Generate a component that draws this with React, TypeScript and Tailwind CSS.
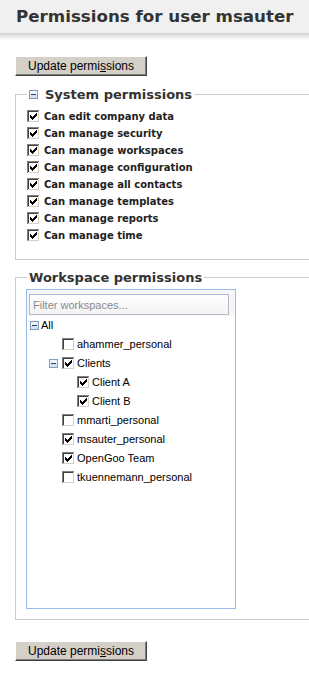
import React from 'react';

const CheckBox: React.FC<{ checked?: boolean }> = ({ checked }) => (
  <svg width="13" height="13" viewBox="0 0 13 13" shapeRendering="crispEdges" className="shrink-0 block">
    <rect x="0" y="0" width="13" height="13" fill="#ffffff" />
    <rect x="0" y="0" width="12" height="1" fill="#808080" />
    <rect x="0" y="0" width="1" height="12" fill="#808080" />
    <rect x="1" y="1" width="10" height="1" fill="#404040" />
    <rect x="1" y="1" width="1" height="10" fill="#404040" />
    <rect x="1" y="11" width="11" height="1" fill="#d4d0c8" />
    <rect x="11" y="1" width="1" height="11" fill="#d4d0c8" />
    {checked && (
      <g fill="#000000">
        <rect x="9" y="3" width="1" height="3" />
        <rect x="8" y="4" width="1" height="3" />
        <rect x="7" y="5" width="1" height="3" />
        <rect x="6" y="6" width="1" height="3" />
        <rect x="5" y="7" width="1" height="3" />
        <rect x="4" y="6" width="1" height="3" />
        <rect x="3" y="5" width="1" height="3" />
      </g>
    )}
  </svg>
);

const MinusBox: React.FC = () => (
  <svg width="9" height="9" viewBox="0 0 9 9" shapeRendering="crispEdges" className="shrink-0 block">
    <rect x="0" y="0" width="9" height="9" fill="#7f9dbf" />
    <rect x="1" y="1" width="7" height="7" fill="#eef3fa" />
    <rect x="1" y="5" width="7" height="3" fill="#d6e2f1" />
    <rect x="2" y="4" width="5" height="1" fill="#23416e" />
  </svg>
);

const UpdateButton: React.FC = () => (
  <button
    type="button"
    className="ml-[15px] flex h-[20px] w-[132px] items-center justify-center border border-t-white border-l-white border-r-[#404040] border-b-[#404040] bg-[#d4d0c8] shadow-[inset_-1px_-1px_#808080] font-['Liberation_Sans',sans-serif] text-[12px] leading-none text-black"
  >
    Update permi<span className="underline">s</span>sions
  </button>
);

const systemPerms = [
  'Can edit company data',
  'Can manage security',
  'Can manage workspaces',
  'Can manage configuration',
  'Can manage all contacts',
  'Can manage templates',
  'Can manage reports',
  'Can manage time',
];

type TreeRow = { label: string; pad: string; expander?: boolean; checkbox?: boolean; checked?: boolean };

const treeRows: TreeRow[] = [
  { label: 'All', pad: 'pl-[3px]', expander: true },
  { label: 'ahammer_personal', pad: 'pl-[35px]', checkbox: true },
  { label: 'Clients', pad: 'pl-[22px]', expander: true, checkbox: true, checked: true },
  { label: 'Client A', pad: 'pl-[50px]', checkbox: true, checked: true },
  { label: 'Client B', pad: 'pl-[50px]', checkbox: true, checked: true },
  { label: 'mmarti_personal', pad: 'pl-[35px]', checkbox: true },
  { label: 'msauter_personal', pad: 'pl-[35px]', checkbox: true, checked: true },
  { label: 'OpenGoo Team', pad: 'pl-[35px]', checkbox: true, checked: true },
  { label: 'tkuennemann_personal', pad: 'pl-[35px]', checkbox: true },
];

export default function App() {
  return (
    <div className="min-h-[675px] w-[309px] overflow-hidden bg-white font-['DejaVu_Sans',sans-serif] text-[#333]">
      {/* Title bar */}
      <div className="flex h-[33px] items-center bg-[#f0f0f0] pl-[16px]">
        <h1 className="whitespace-nowrap text-[16.7px] font-bold leading-none text-[#333]">
          Permissions for user msauter
        </h1>
      </div>
      <div className="h-[7px] bg-gradient-to-b from-[#d2d2d2] to-white" />

      <div className="pt-[16px]">
        <UpdateButton />
      </div>

      {/* System permissions */}
      <fieldset className="ml-[15px] mt-[10px] border border-r-0 border-[#cccccc] pl-[11px] pb-[15px]">
        <legend className="px-[2px]">
          <span className="flex h-[16px] items-center gap-[7px] text-[13px] font-bold leading-none text-[#333]">
            <MinusBox />
            System permissions
          </span>
        </legend>
        <div className="pt-[6px]">
          {systemPerms.map((p) => (
            <div key={p} className="flex h-[17px] items-center gap-[4px]">
              <CheckBox checked />
              <span className="whitespace-nowrap text-[10px] font-bold text-[#222]">{p}</span>
            </div>
          ))}
        </div>
      </fieldset>

      {/* Workspace permissions */}
      <fieldset className="ml-[15px] mt-[9px] border border-r-0 border-[#cccccc] pl-[10px] pb-[10px]">
        <legend className="ml-[1px] px-[2px]">
          <span className="flex h-[16px] items-center text-[13px] font-bold leading-none text-[#333]">
            Workspace permissions
          </span>
        </legend>
        <div className="mt-[4px] flex h-[320px] w-[210px] flex-col border border-[#99bbe8] bg-white font-['Liberation_Sans',sans-serif]">
          <div className="bg-[#f6f6f6] px-[2px] pt-[4px] pb-[1px]">
            <input
              type="text"
              placeholder="Filter workspaces..."
              className="block h-[21px] w-[200px] border border-[#b5b8c8] bg-gradient-to-b from-white to-[#f3f3f3] px-[3px] text-[11px] text-black outline-none placeholder:text-[#8a8a8a]"
            />
          </div>
          <div className="flex-1 text-[11px] text-black">
            {treeRows.map((r) => (
              <div key={r.label} className={`flex h-[19px] items-center whitespace-nowrap ${r.pad}`}>
                {r.expander && <MinusBox />}
                {r.expander && r.checkbox && <span className="w-[4px]" />}
                {r.checkbox && <CheckBox checked={r.checked} />}
                <span className="ml-[2px]">{r.label}</span>
              </div>
            ))}
          </div>
        </div>
      </fieldset>

      <div className="pt-[21px]">
        <UpdateButton />
      </div>
    </div>
  );
}
